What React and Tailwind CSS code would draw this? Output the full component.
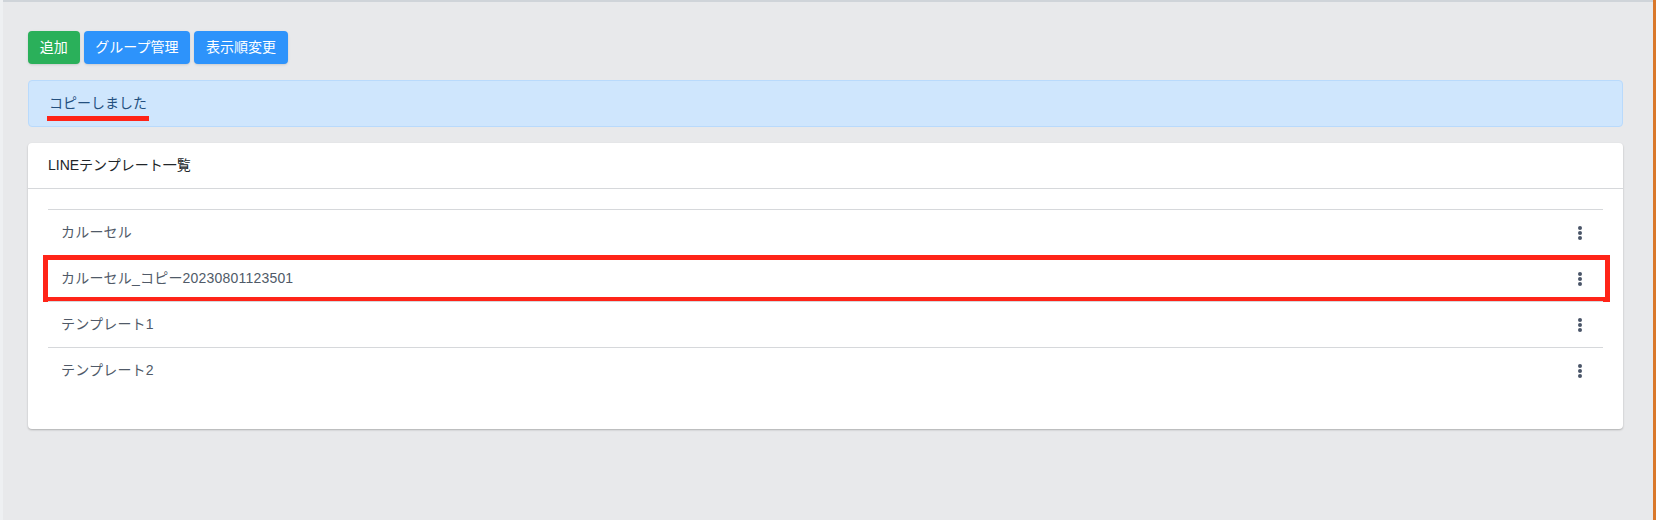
import React from "react";

const font = { fontFamily: '"Liberation Sans", "Noto Sans CJK JP", sans-serif' };

function Dots() {
  return (
    <svg width="6" height="14" viewBox="0 0 6 14" className="text-[#4a5568]">
      <circle cx="3" cy="2" r="2" fill="currentColor" />
      <circle cx="3" cy="7" r="2" fill="currentColor" />
      <circle cx="3" cy="12" r="2" fill="currentColor" />
    </svg>
  );
}

const rows = ["カルーセル", "カルーセル_コピー20230801123501", "テンプレート1", "テンプレート2"];

export default function App() {
  return (
    <div className="flex h-[520px] w-[1656px] bg-[#e8e9eb]" style={font}>
      <div className="w-[3px] bg-[#eef0f2]" />
      <div className="flex-1 border-t-2 border-[#cfd4d9] pl-[25px] pr-[30px] pt-[29px]">
        <div className="flex gap-1">
          <button className="h-[33px] rounded-[4px] bg-[#2ab05a] px-[11.75px] text-[14px] text-white shadow-sm">追加</button>
          <button className="h-[33px] rounded-[4px] bg-[#2d93fb] px-[11.75px] text-[14px] text-white shadow-sm">グループ管理</button>
          <button className="h-[33px] rounded-[4px] bg-[#2d93fb] px-[11.75px] text-[14px] text-white shadow-sm">表示順変更</button>
        </div>
        <div className="relative mt-4 flex h-[47px] items-center rounded-[4px] border border-[#b9dafc] bg-[#cfe6fd] pl-[20px] text-[14px] text-[#24507f]">
          コピーしました
          <div className="absolute left-[18px] top-[35px] h-[5px] w-[102px] bg-[#ff2418]" />
        </div>
        <div className="mt-4 rounded-[4px] bg-white shadow-[0_1px_2px_rgba(0,0,0,0.25)]">
          <div className="flex h-[46px] items-center border-b border-[#d6d8db] pl-5 text-[14px] text-[#212529]">
            LINEテンプレート一覧
          </div>
          <div className="px-5 pb-[36px] pt-5">
            {rows.map((r, i) => (
              <div
                key={i}
                className="relative flex h-[46px] items-center justify-between border-t border-[#d6d8db] pl-[13px] pr-[20px] text-[14px] tracking-[0.2px] text-[#505a68]"
              >
                <span>{r}</span>
                <Dots />
                {i === 1 && (
                  <div className="pointer-events-none absolute -left-[5px] -right-[7px] -top-px h-[47px] border-[5px] border-[#ff2418]" />
                )}
              </div>
            ))}
          </div>
        </div>
      </div>
      <div className="w-[3px] bg-[#d9782b]" />
    </div>
  );
}
